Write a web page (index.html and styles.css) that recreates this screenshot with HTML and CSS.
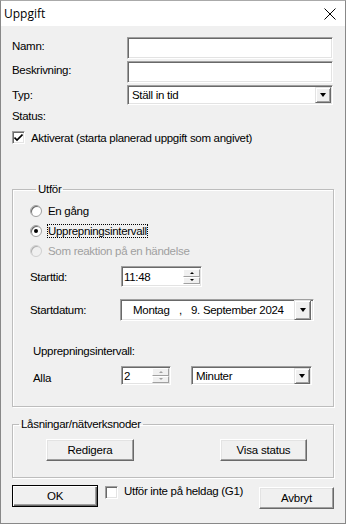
FILE: index.html
```html
<!DOCTYPE html>
<html>
<head>
<meta charset="utf-8">
<link rel="stylesheet" href="styles.css">
</head>
<body>
<div class="window">
  <div class="titlebar">
    <span class="title">Uppgift</span>
    <svg class="close" width="12" height="12" viewBox="0 0 12 12"><path d="M0.5 0.5 L11.5 11.5 M11.5 0.5 L0.5 11.5" stroke="#000" stroke-width="1"/></svg>
  </div>
  <div class="content">
    <div class="form">
      <div class="lbl l-namn">Namn:</div>
      <div class="field edit"></div>
      <div class="lbl l-besk">Beskrivning:</div>
      <div class="field edit"></div>
      <div class="lbl l-typ">Typ:</div>
      <div class="field combo">
        <span class="combo-text">Ställ in tid</span>
        <span class="dropbtn"><span class="tri"></span></span>
      </div>
      <div class="lbl l-status">Status:</div>
      <div></div>
    </div>
    <label class="check-row">
      <span class="checkbox checked"><svg width="9" height="8" viewBox="0 0 9 8"><path d="M0.5 3.5 L3 6 L8.5 0.5" stroke="#000" stroke-width="1.6" fill="none"/></svg></span>
      <span>Aktiverat (starta planerad uppgift som angivet)</span>
    </label>

    <fieldset class="group g-utfor">
      <legend>Utför</legend>
      <div class="radios">
        <div class="radio-row"><span class="radio"></span><span>En gång</span></div>
        <div class="radio-row"><span class="radio on"></span><span class="focus">Upprepningsintervall</span></div>
        <div class="radio-row disabled"><span class="radio"></span><span>Som reaktion på en händelse</span></div>
      </div>
      <div class="row r-time">
        <span class="rlbl">Starttid:</span>
        <div class="spin time">
          <span class="edit-inner">11:48</span>
          <span class="spinbtns"><span class="sb"><span class="up"></span></span><span class="sb"><span class="down"></span></span></span>
        </div>
      </div>
      <div class="row r-date">
        <span class="rlbl">Startdatum:</span>
        <div class="datepick">
          <span class="d1">Montag</span><span class="d2">,</span><span class="d3">9. September 2024</span>
          <span class="dropbtn big"><span class="tri"></span></span>
        </div>
      </div>
      <div class="rep-lbl">Upprepningsintervall:</div>
      <div class="row r-alla">
        <span class="rlbl alla">Alla</span>
        <div class="spin num">
          <span class="edit-inner">2</span>
          <span class="spinbtns dis"><span class="sb"><span class="up"></span></span><span class="sb"><span class="down"></span></span></span>
        </div>
        <div class="field combo minuter">
          <span class="combo-text">Minuter</span>
          <span class="dropbtn"><span class="tri"></span></span>
        </div>
      </div>
    </fieldset>

    <fieldset class="group g-las">
      <legend>Låsningar/nätverksnoder</legend>
      <div class="btnrow">
        <button class="btn redigera">Redigera</button>
        <button class="btn visa">Visa status</button>
      </div>
    </fieldset>

    <div class="footer">
      <button class="btn ok">OK</button>
      <label class="check-row foot-check">
        <span class="checkbox"></span>
        <span>Utför inte på heldag (G1)</span>
      </label>
      <button class="btn avbryt">Avbryt</button>
    </div>
  </div>
</div>
</body>
</html>
```

FILE: styles.css
```css
html, body { margin: 0; padding: 0; }
body { width: 346px; height: 524px; overflow: hidden; font-family: "Liberation Sans", Arial, sans-serif; font-size: 11.5px; letter-spacing: -0.3px; color: #000; }
.window { box-sizing: border-box; width: 346px; height: 524px; border: 1px solid #888; border-top-color: #aaa; background: #f0f0f0; display: flex; flex-direction: column; }
.titlebar { height: 25px; background: #fff; display: flex; align-items: center; justify-content: space-between; padding: 0 9px 0 3px; flex: none; }
.title { font-family: "Open Sans", "Noto Sans", sans-serif; font-size: 12px; letter-spacing: 0; }
.close { display: block; margin-top: 1px; }
.content { padding: 11px 11px 0 11px; display: flex; flex-direction: column; }

.form { display: grid; grid-template-columns: 115px 206px; row-gap: 2px; }
.lbl { line-height: 14px; }
.l-namn, .l-besk { padding-top: 2px; }
.l-typ { padding-top: 3px; }
.l-status { padding-top: 2px; }
.field { box-sizing: border-box; background: #fff; border: 1px solid; border-color: #a0a0a0 #fff #fff #a0a0a0; box-shadow: inset 1px 1px 0 #696969, inset -1px -1px 0 #e3e3e3; }
.edit { height: 22px; }
.combo { height: 20px; display: flex; align-items: center; justify-content: space-between; }
.combo-text { padding-left: 4px; }
.dropbtn { box-sizing: border-box; width: 16px; height: 16px; margin-right: 1px; background: #f0f0f0; border: 1px solid; border-color: #e3e3e3 #696969 #696969 #e3e3e3; box-shadow: inset 1px 1px 0 #fff, inset -1px -1px 0 #a0a0a0; display: flex; align-items: center; justify-content: center; }
.dropbtn.big { width: 17px; height: 20px; }
.tri { width: 0; height: 0; border-left: 3.5px solid transparent; border-right: 3.5px solid transparent; border-top: 4px solid #000; }

.check-row { display: flex; align-items: center; gap: 6px; margin-top: 8px; }
.checkbox { box-sizing: border-box; width: 13px; height: 13px; background: #fff; border: 1px solid; border-color: #a0a0a0 #fff #fff #a0a0a0; box-shadow: inset 1px 1px 0 #696969, inset -1px -1px 0 #e3e3e3; display: flex; align-items: center; justify-content: center; flex: none; }
.checkbox svg { display: block; }

.group { margin: 0; border: 1px solid #bdbdbd; box-shadow: 1px 1px 0 #fff, inset 1px 1px 0 #fff; padding: 0; min-width: 0; }
.group legend { padding: 0 2px; margin-left: 6px; line-height: 13px; }
.g-utfor { margin-top: 39px; height: 224px; box-sizing: border-box; padding: 8px 0 0 17px; }
.radios { display: flex; flex-direction: column; gap: 6px; }
.radio-row { display: flex; align-items: center; gap: 6px; height: 14px; }
.radio-row.disabled { color: #a0a0a0; }
.radio { box-sizing: border-box; width: 12px; height: 12px; border-radius: 50%; background: #fff; border: 1px solid #a0a0a0; box-shadow: inset 1px 1px 0 #696969; position: relative; flex: none; }
.radio-row.disabled .radio { background: #f0f0f0; border-color: #d0d0d0; box-shadow: inset 1px 1px 0 #b0b0b0; }
.radio.on::after { content: ""; position: absolute; left: 3px; top: 3px; width: 4px; height: 4px; border-radius: 50%; background: #000; }
.focus { outline: 1px dotted #000; outline-offset: 0; }

.row { display: flex; align-items: center; }
.rlbl { width: 91px; }
.r-time { margin-top: 8px; }
.r-date { margin-top: 12px; }
.spin { box-sizing: border-box; background: #fff; border: 1px solid; border-color: #a0a0a0 #fff #fff #a0a0a0; box-shadow: inset 1px 1px 0 #696969, inset -1px -1px 0 #e3e3e3; display: flex; justify-content: space-between; align-items: stretch; padding: 2px 1px 2px 2px; }
.spin.time { width: 81px; height: 21px; }
.spin.num { width: 50px; height: 19px; padding-top: 1px; padding-bottom: 1px; }
.edit-inner { line-height: 16px; }
.spinbtns { display: flex; flex-direction: column; width: 17px; }
.sb { flex: 1; box-sizing: border-box; border: 1px solid; border-color: #fff #a0a0a0 #a0a0a0 #fff; background: #f0f0f0; display: flex; align-items: center; justify-content: center; }
.up { width: 0; height: 0; border-left: 2px solid transparent; border-right: 2px solid transparent; border-bottom: 2px solid #000; }
.down { width: 0; height: 0; border-left: 2px solid transparent; border-right: 2px solid transparent; border-top: 2px solid #000; }
.spinbtns.dis .up { border-bottom-color: #a0a0a0; }
.spinbtns.dis .down { border-top-color: #a0a0a0; }
.datepick { box-sizing: border-box; width: 194px; height: 22px; margin-left: -1px; background: #fff; border: 1px solid; border-color: #a0a0a0 #fff #fff #a0a0a0; box-shadow: inset 1px 1px 0 #696969, inset -1px -1px 0 #e3e3e3; display: flex; align-items: center; padding-right: 1px; }
.d1 { margin-left: 12px; width: 46px; }
.d2 { width: 12px; }
.d3 { flex: 1; }
.rep-lbl { margin-top: 24px; margin-left: 3px; }
.r-alla { margin-top: 9px; margin-left: 3px; }
.alla { width: 88px; padding-top: 4px; }
.minuter { width: 121px; height: 19px; margin-left: 20px; }

.g-las { margin-top: 11px; height: 60px; box-sizing: border-box; padding: 8px 0 0 0; }
.btnrow { display: flex; justify-content: space-between; padding: 0 26px 0 33px; }
.btn { font-family: "Liberation Sans", Arial, sans-serif; font-size: 11.5px; letter-spacing: -0.2px; color: #000; box-sizing: border-box; background: #f0f0f0; border: 1px solid; border-color: #fff #696969 #696969 #fff; box-shadow: inset -1px -1px 0 #a0a0a0, inset 1px 1px 0 #e3e3e3; padding: 0; margin: 0; }
.redigera { width: 88px; height: 22px; }
.visa { width: 87px; height: 22px; }
.footer { display: flex; align-items: flex-start; margin-top: 7px; }
.ok { width: 86px; height: 22px; border: 1px solid #000; box-shadow: inset 1px 1px 0 #fff, inset -1px -1px 0 #696969, inset -2px -2px 0 #a0a0a0; }
.foot-check { margin: 0 0 0 7px; align-items: flex-start; gap: 6px; }
.foot-check .checkbox { margin-top: 1px; }
.avbryt { width: 75px; height: 22px; margin-left: auto; margin-top: 2px; }
```
